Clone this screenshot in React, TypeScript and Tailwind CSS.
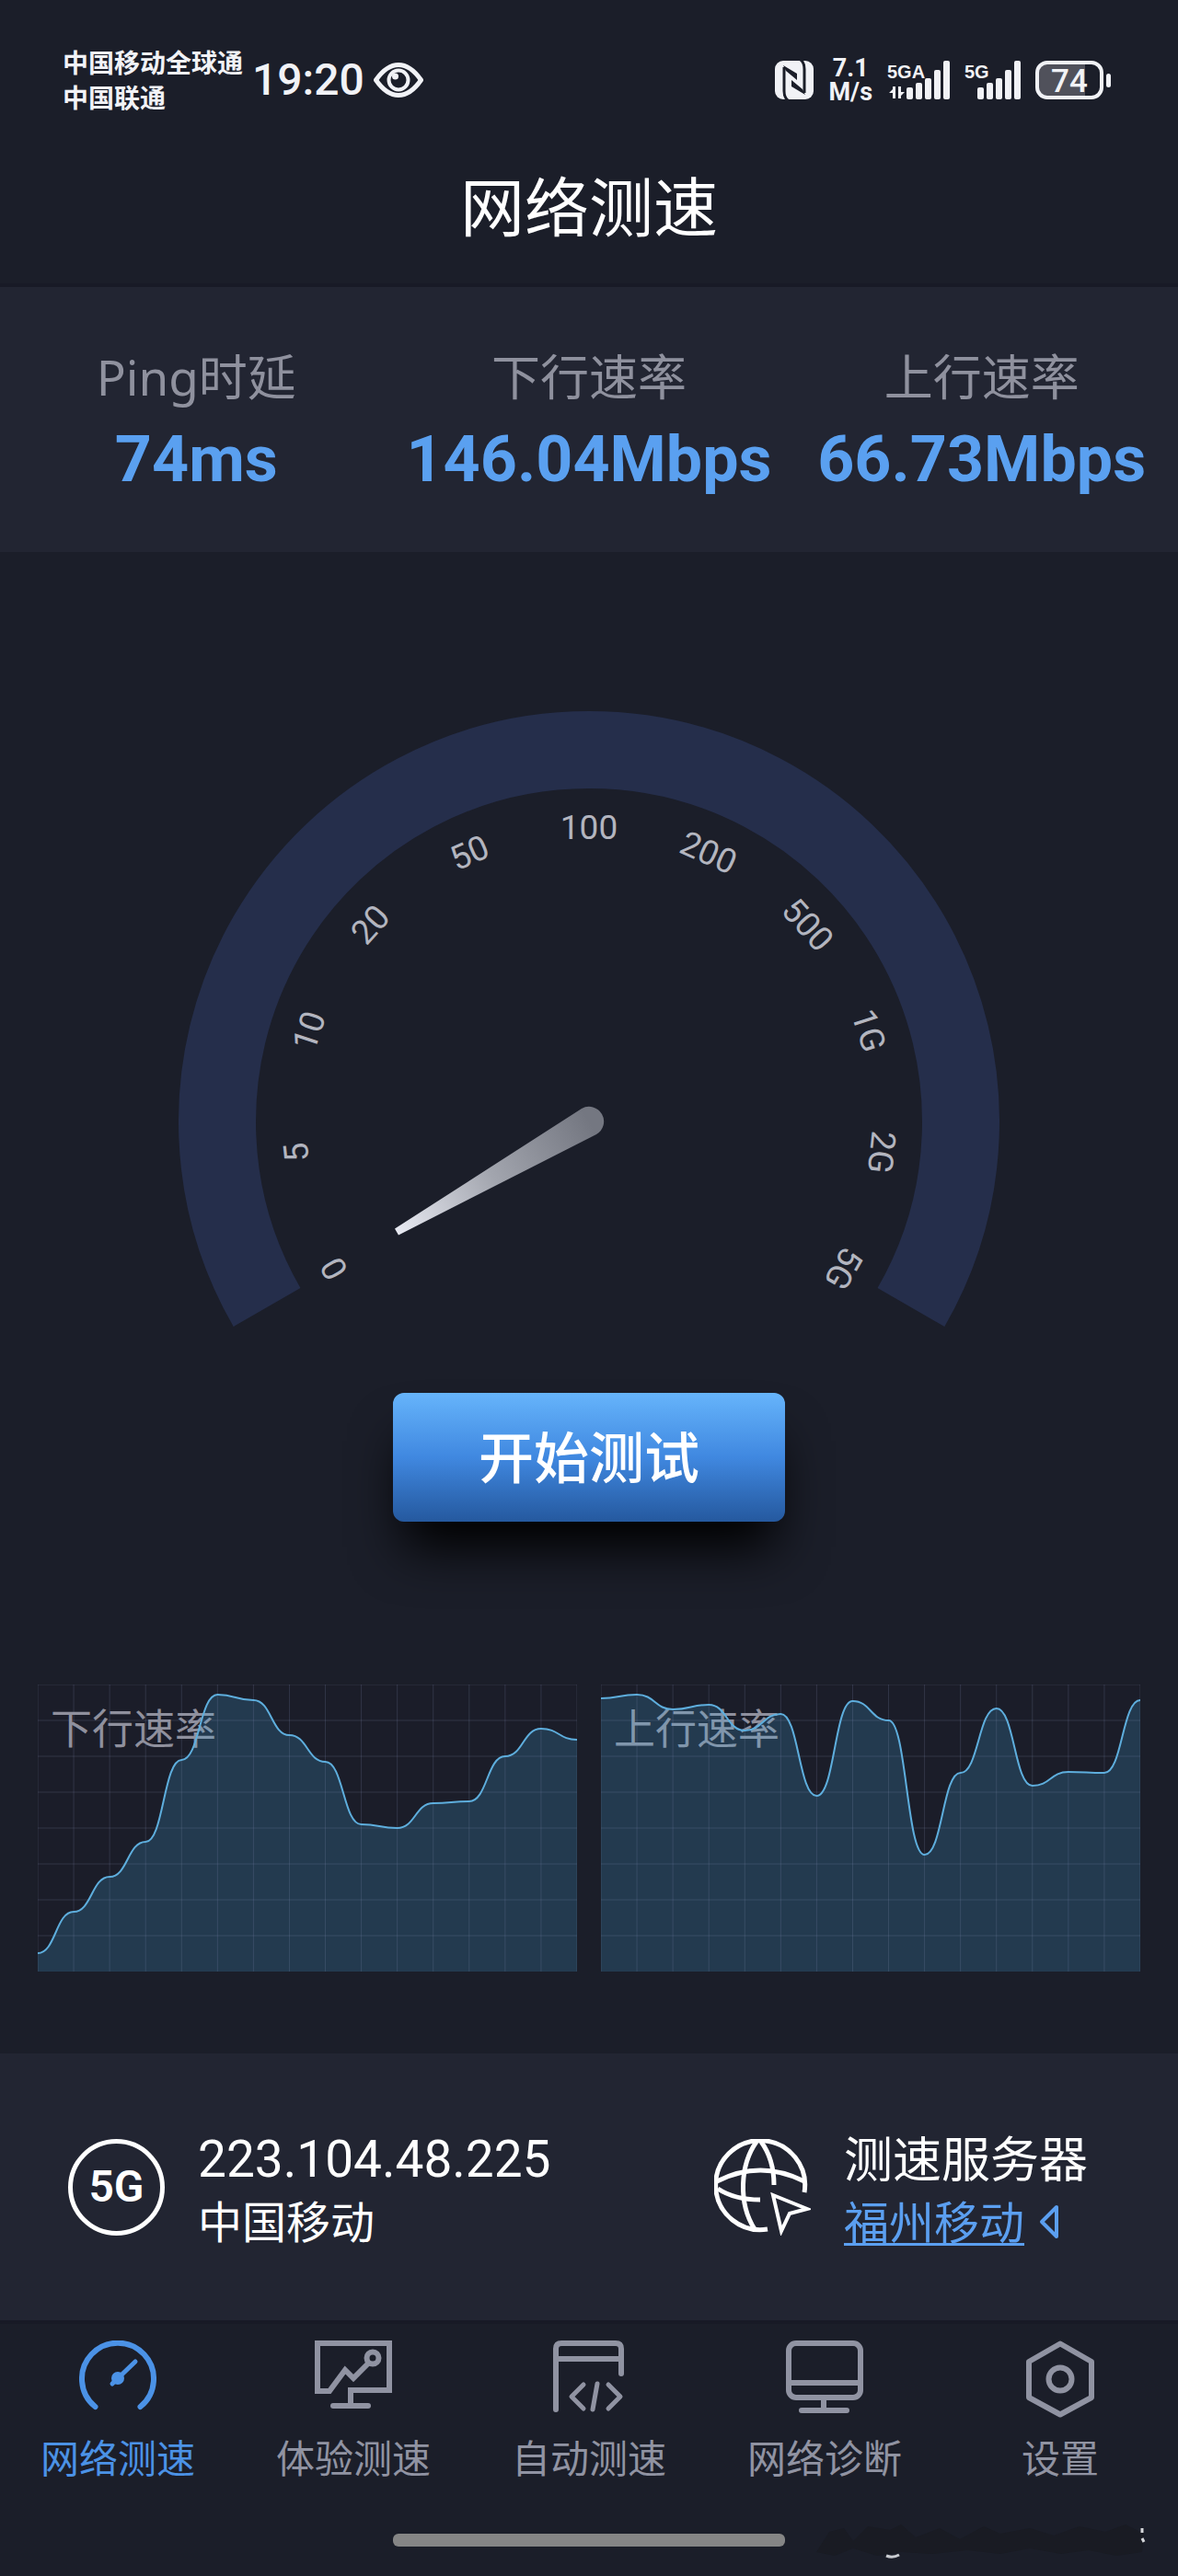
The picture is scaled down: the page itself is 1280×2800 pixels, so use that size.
import type { ReactNode } from 'react'
import { clsx } from 'clsx'

interface Stat {
  label: string
  value: string
}

interface Tab {
  id: string
  label: string
  icon: ReactNode
}

const stats: Stat[] = [
  { label: 'Ping时延', value: '74ms' },
  { label: '下行速率', value: '146.04Mbps' },
  { label: '上行速率', value: '66.73Mbps' },
]

const gaugeMarks = ['0', '5', '10', '20', '50', '100', '200', '500', '1G', '2G', '5G']

// distance from the top of the plot, one value per grid column
const downlink = [292, 247, 209, 171, 82, 11, 17, 55, 84, 152, 156, 129, 127, 78, 48, 60]
const uplink = [15, 11, 27, 22, 50, 32, 121, 18, 39, 185, 96, 26, 110, 95, 96, 17]

const PLOT_WIDTH = 586
const PLOT_HEIGHT = 312
const COLUMNS = 15
const ROWS = 8

function smoothPath(points: number[]) {
  const step = PLOT_WIDTH / (points.length - 1)
  return points
    .map((y, i) => {
      if (i === 0) return `M0 ${y}`
      const mid = (i - 0.5) * step
      return `C${mid} ${points[i - 1]} ${mid} ${y} ${i * step} ${y}`
    })
    .join(' ')
}

function EyeIcon() {
  return (
    <svg width="54" height="38" viewBox="0 0 54 38" fill="none" stroke="currentColor" aria-hidden="true">
      <path d="M2.500 19Q14 2.500 27 2.500T51.500 19Q40 35.500 27 35.500T2.500 19Z" strokeWidth="5" strokeLinejoin="round" />
      <circle cx="27" cy="19" r="10.500" strokeWidth="4" />
      <circle cx="23.500" cy="15" r="3.500" fill="currentColor" stroke="none" />
    </svg>
  )
}

function NfcIcon() {
  return (
    <svg width="42" height="42" viewBox="0 0 42 42" fill="none" aria-hidden="true">
      <rect width="42" height="42" rx="9" fill="currentColor" />
      <path d="M14 43Q10 40 10 33V7" stroke="#1b1e29" strokeWidth="3" />
      <path d="M28 -1Q32 2 32 9V35" stroke="#1b1e29" strokeWidth="3" />
      <path d="M9 5L24 14V21L12 11ZM33 37L18 28V21L30 31Z" fill="#1b1e29" />
    </svg>
  )
}

function Signal({ label, width, arrows }: { label: string; width: number; arrows?: boolean }) {
  const tops = [29, 24, 19, 10, 0]
  return (
    <svg width={width} height="42" viewBox={`0 0 ${width} 42`} fill="currentColor" role="img" aria-label={`${label} 信号`}>
      <text x="0" y="19" className="font-['Liberation_Sans',sans-serif] text-[20px] font-bold">
        {label}
      </text>
      {arrows && <path d="M6 28V41H9V28ZM9 28L2 35H9ZM12 28V41H15V28ZM12 41L19 34H12Z" />}
      {tops.map((top, i) => (
        <rect key={top} x={width - 47 + i * 10} y={top} width="7" height={42 - top} rx="2" />
      ))}
    </svg>
  )
}

function Battery() {
  return (
    <svg width="82" height="42" viewBox="0 0 82 42" role="img" aria-label="电量 74">
      <path d="M13 3H54V39H13Q3 39 3 29V13Q3 3 13 3Z" fill="#50515b" />
      <rect x="2" y="2" width="70" height="38" rx="11" fill="none" stroke="currentColor" strokeWidth="4" />
      <rect x="77" y="14" width="5" height="15" rx="2.500" fill="currentColor" />
      <text x="37" y="34" textAnchor="middle" fill="currentColor" className="font-[Roboto,sans-serif] text-[35px] font-medium">
        74
      </text>
    </svg>
  )
}

function StatusBar() {
  return (
    <div className="flex h-[174px] items-center justify-between pr-[73px] pl-[68px] text-[#f1f2f6]">
      <div className="flex items-center gap-[10px]">
        <div className="text-[28px] leading-[38px] font-bold whitespace-nowrap">
          <p>中国移动全球通</p>
          <p>中国联通</p>
        </div>
        <time className="font-[Roboto,sans-serif] text-[48px] font-medium">19:20</time>
        <EyeIcon />
      </div>
      <div className="flex items-center gap-4">
        <NfcIcon />
        <p className="text-center font-[Roboto,sans-serif] text-[27px] leading-[26px] font-bold">
          7.1
          <br />
          M/s
        </p>
        <Signal label="5GA" width={68} arrows />
        <Signal label="5G" width={61} />
        <Battery />
      </div>
    </div>
  )
}

function Gauge() {
  return (
    <svg viewBox="0 0 892 670" className="w-[892px] max-w-full" role="img" aria-label="测速表盘">
      <defs>
        <linearGradient id="needle" gradientUnits="userSpaceOnUse" x1="237" y1="566" x2="446" y2="446">
          <stop offset="0" stopColor="#e8eaf2" />
          <stop offset="0.5" stopColor="#a2a5ae" />
          <stop offset="1" stopColor="#747781" />
        </linearGradient>
      </defs>
      <path d="M96.100 648A404 404 0 1 1 795.900 648" fill="none" stroke="#252e4b" strokeWidth="84" />
      {gaugeMarks.map((mark, i) => (
        <text
          key={mark}
          x="446"
          y="139"
          textAnchor="middle"
          fill="#b3b5bf"
          transform={`rotate(${i * 24 - 120} 446 446)`}
          className="font-[Roboto,sans-serif] text-[37px]"
        >
          {mark}
        </text>
      ))}
      <path d="M235 562.500L438 432A16 16 0 1 1 454 460L239 569.500Z" fill="url(#needle)" />
    </svg>
  )
}

function RateChart({ title, points }: { title: string; points: number[] }) {
  const line = smoothPath(points)
  return (
    <figure className="grid flex-1 bg-[#1b1d29]">
      <figcaption className="col-start-1 row-start-1 px-[14px] pt-4 text-[45px] leading-[64px] text-[#8f909d]">{title}</figcaption>
      <svg
        viewBox={`0 0 ${PLOT_WIDTH} ${PLOT_HEIGHT}`}
        preserveAspectRatio="none"
        className="relative col-start-1 row-start-1 h-[312px] w-full"
        aria-hidden="true"
      >
        <path d={`${line} V${PLOT_HEIGHT} H0 Z`} fill="#44aeec" fillOpacity="0.2" />
        <g stroke="#8c96be" strokeOpacity="0.2">
          {Array.from({ length: COLUMNS + 1 }, (_, i) => {
            const x = (i * PLOT_WIDTH) / COLUMNS
            return <line key={i} x1={x} x2={x} y1="0" y2={PLOT_HEIGHT} />
          })}
          {Array.from({ length: ROWS }, (_, i) => {
            const y = (i * PLOT_HEIGHT) / ROWS
            return <line key={i} x1="0" x2={PLOT_WIDTH} y1={y} y2={y} />
          })}
        </g>
        <path d={line} fill="none" stroke="#5eaedd" strokeWidth="2" />
      </svg>
    </figure>
  )
}

function GlobeIcon() {
  return (
    <svg width="105" height="105" viewBox="0 0 105 105" fill="none" stroke="currentColor" strokeWidth="5" aria-hidden="true">
      <path d="M98 58A48.500 48.500 0 1 0 58 98" />
      <path d="M3 46Q50 22 98 46M4 54Q22 66 50 66" />
      <path d="M46 3C28 28 26 70 44 98M51 3Q65 22 65 50" />
      <path d="M64 61L101 76L82 81L73 100Z" strokeWidth="4" />
    </svg>
  )
}

function NetworkInfo() {
  return (
    <section className="flex h-[290px] items-center justify-between bg-[#222532] pr-[98px] pl-[74px] text-white">
      <div className="flex items-center gap-9">
        <div className="grid size-[105px] place-items-center rounded-full border-5 border-white font-[Roboto,sans-serif] text-[48px] font-semibold">
          5G
        </div>
        <div className="pt-2 leading-[68px]">
          <p className="font-[Roboto,sans-serif] text-[55px]">223.104.48.225</p>
          <p className="text-[48px]">中国移动</p>
        </div>
      </div>
      <div className="flex items-center gap-9">
        <GlobeIcon />
        <div className="pt-2 leading-[68px]">
          <p className="text-[53px]">测速服务器</p>
          <a href="#server" className="flex items-center gap-4 text-[49px] text-[#5b9ff0]">
            <span className="underline decoration-3 underline-offset-4">福州移动</span>
            <svg width="22" height="38" viewBox="0 0 22 38" fill="none" stroke="currentColor" strokeWidth="4" aria-hidden="true">
              <path d="M19 3V35L3 19Z" strokeLinejoin="round" />
            </svg>
          </a>
        </div>
      </div>
    </section>
  )
}

const tabs: Tab[] = [
  {
    id: 'speed',
    label: '网络测速',
    icon: (
      <>
        <path d="M17.500 72A39 39 0 1 1 66.500 72" />
        <path d="M61 23L36 47" strokeWidth="5" />
        <circle cx="42" cy="41" r="7" fill="currentColor" stroke="none" />
      </>
    ),
  },
  {
    id: 'experience',
    label: '体验测速',
    icon: (
      <>
        <path d="M39 71V54H81V3H3V55H16L33 32L42 41L58 25" strokeLinejoin="miter" />
        <circle cx="63" cy="19" r="6.500" />
        <path d="M20 71H58" />
      </>
    ),
  },
  {
    id: 'auto',
    label: '自动测速',
    icon: (
      <>
        <path d="M6 75V9Q6 3 12 3H71Q77 3 77 9V36M6 20H77" />
        <path d="M36 48L23 61L36 74M51 47L46 75M63 48L76 61L63 74" strokeWidth="5" />
      </>
    ),
  },
  {
    id: 'diagnose',
    label: '网络诊断',
    icon: (
      <>
        <rect x="3" y="3" width="78" height="59" rx="8" />
        <path d="M3 46H81M41 62V76M17 76H66" />
      </>
    ),
  },
  {
    id: 'settings',
    label: '设置',
    icon: (
      <>
        <path d="M42 3.500L76 23V62L42 80.500L8 62V23Z" />
        <circle cx="42" cy="42" r="12.500" />
      </>
    ),
  },
]

function TabBar({ active }: { active: string }) {
  return (
    <nav className="grid grid-cols-5 border-t-4 border-[#181a26] pt-[18px]">
      {tabs.map((tab) => (
        <a
          key={tab.id}
          href={`#${tab.id}`}
          aria-current={tab.id === active ? 'page' : undefined}
          className={clsx(
            'flex flex-col items-center gap-[14px] text-[42px] leading-[60px]',
            tab.id === active ? 'text-[#4b92e6]' : 'text-[#9093a2]',
          )}
        >
          <svg
            viewBox="0 0 84 84"
            className="size-[84px]"
            fill="none"
            stroke="currentColor"
            strokeWidth="6"
            strokeLinecap="round"
            strokeLinejoin="round"
            aria-hidden="true"
          >
            {tab.icon}
          </svg>
          {tab.label}
        </a>
      ))}
    </nav>
  )
}

// faint ink smear beside the home indicator
function Smear() {
  return (
    <svg width="368" height="42" viewBox="0 0 368 42" aria-hidden="true">
      <path
        d="M4 34L18 12L34 8L44 22L60 6L84 10L96 4L112 18L138 8L160 20L186 6L204 14L236 8L262 16L290 6L318 12L340 4L360 14L358 34L330 38L300 32L270 36L236 30L204 36L168 32L130 36L96 34L70 38L44 30L24 38Z"
        fill="#191b23"
      />
      <path d="M80 38Q87 41 94 37" fill="none" stroke="#c9cbd0" strokeWidth="3" />
      <path d="M358 8V13M358 19L360 23" fill="none" stroke="#d5d6da" strokeWidth="3" />
    </svg>
  )
}

export default function App() {
  return (
    <div className="bg-[#1b1e29] font-['Noto_Sans','Noto_Sans_CJK_SC',sans-serif]">
      <header className="border-b-4 border-[#181a26] pb-8">
        <StatusBar />
        <h1 className="text-center text-[70px] leading-[102px] text-white">网络测速</h1>
      </header>

      <dl className="grid grid-cols-3 bg-[#222532] pt-[58px] pb-[52px] text-center whitespace-nowrap">
        {stats.map((stat) => (
          <div key={stat.label}>
            <dt className="text-[53px] leading-20 text-[#8f919e]">{stat.label}</dt>
            <dd className="font-[Roboto,sans-serif] text-[70px] leading-[98px] font-bold text-[#5aa0f0]">{stat.value}</dd>
          </div>
        ))}
      </dl>

      <main>
        <div className="flex flex-col items-center gap-[71px] pt-[173px]">
          <Gauge />
          <button
            type="button"
            className="h-[140px] w-1/3 rounded-xl bg-linear-to-b from-[#66b4fb] via-[#4088e0] to-[#25599f] text-[60px] font-medium text-white shadow-[0_40px_56px_-12px_#000000]"
          >
            开始测试
          </button>
        </div>
        <div className="flex gap-[26px] px-[41px] pt-[177px] pb-[89px]">
          <RateChart title="下行速率" points={downlink} />
          <RateChart title="上行速率" points={uplink} />
        </div>
        <NetworkInfo />
      </main>

      <TabBar active="speed" />
      <footer className="grid grid-cols-3 items-center justify-items-center pt-[38px] pb-[18px]">
        <div className="col-start-2 h-[14px] w-full rounded-md bg-[#858585]" />
        <Smear />
      </footer>
    </div>
  )
}
